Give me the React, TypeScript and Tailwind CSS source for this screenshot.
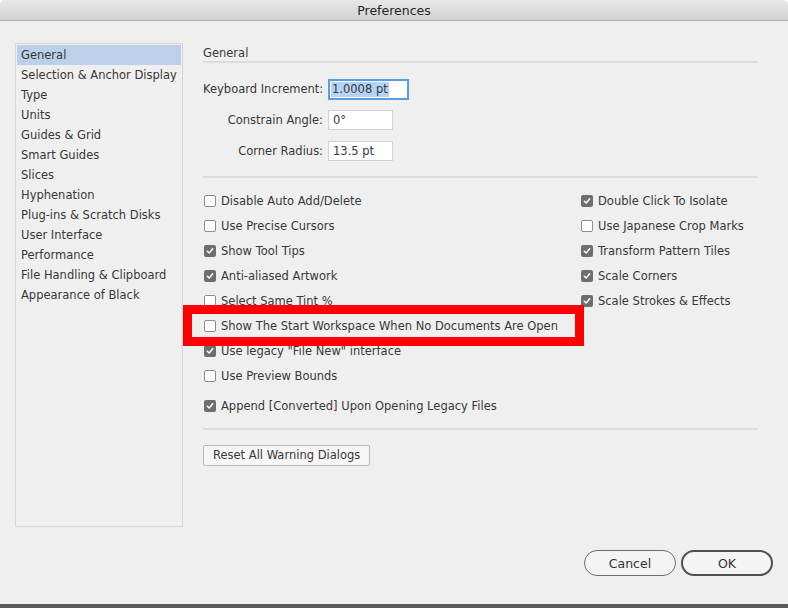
import React from 'react';

const font = { fontFamily: '"DejaVu Sans", "Liberation Sans", sans-serif' };

const sections = [
  'General',
  'Selection & Anchor Display',
  'Type',
  'Units',
  'Guides & Grid',
  'Smart Guides',
  'Slices',
  'Hyphenation',
  'Plug-ins & Scratch Disks',
  'User Interface',
  'Performance',
  'File Handling & Clipboard',
  'Appearance of Black',
];

const leftOptions: [string, boolean][] = [
  ['Disable Auto Add/Delete', false],
  ['Use Precise Cursors', false],
  ['Show Tool Tips', true],
  ['Anti-aliased Artwork', true],
  ['Select Same Tint %', false],
  ['Show The Start Workspace When No Documents Are Open', false],
  ['Use legacy "File New" interface', true],
  ['Use Preview Bounds', false],
];

const rightOptions: [string, boolean][] = [
  ['Double Click To Isolate', true],
  ['Use Japanese Crop Marks', false],
  ['Transform Pattern Tiles', true],
  ['Scale Corners', true],
  ['Scale Strokes & Effects', true],
];

// чекбокс в стиле macOS (серый при неактивном окне)
const Check: React.FC<{ checked: boolean }> = ({ checked }) =>
  checked ? (
    <span className="flex h-[12px] w-[12px] shrink-0 items-center justify-center rounded-[2px] bg-[#6e6e6e]">
      <svg width="8" height="8" viewBox="0 0 8 8">
        <path d="M1.3 4.2 L3.2 6 L6.7 1.8" fill="none" stroke="#fff" strokeWidth="1.5" strokeLinecap="round" strokeLinejoin="round" />
      </svg>
    </span>
  ) : (
    <span className="h-[12px] w-[12px] shrink-0 rounded-[2px] border border-[#8d8d8d] bg-white" />
  );

const Option: React.FC<{ label: string; checked: boolean }> = ({ label, checked }) => (
  <div className="flex h-[25px] items-center gap-[5px] whitespace-nowrap">
    <Check checked={checked} />
    <span className="pt-[2px]">{label}</span>
  </div>
);

const Field: React.FC<{ label: string; value: string; width: string; focused?: boolean }> = ({
  label,
  value,
  width,
  focused,
}) => (
  <div className="flex h-[20px] items-center">
    <span className="w-[120px] whitespace-nowrap pt-[2px] text-right">{label}</span>
    <div
      className={
        focused
          ? `ml-[5px] flex h-[21px] ${width} items-center border-2 border-[#5b9be6] bg-white pl-[1px] pt-[1px]`
          : `ml-[5px] flex h-[20px] ${width} items-center border border-[#d2d2d2] bg-white pl-[4px] pt-[2px]`
      }
    >
      {focused ? <span className="bg-[#b4d3f5] px-[1px] leading-[15px]">{value}</span> : <span>{value}</span>}
    </div>
  </div>
);

const Separator: React.FC = () => <div className="h-[2px] w-[555px] bg-[#dcdcdc]" />;

export default function App() {
  return (
    <div
      className="relative flex h-[608px] w-[788px] flex-col overflow-hidden rounded-t-[5px] bg-[#efefef] text-[11.5px] text-[#383838]"
      style={font}
    >
      <div className="flex h-[21px] shrink-0 items-center justify-center border-b border-[#b1b1b1] bg-gradient-to-b from-[#e8e8e8] to-[#d2d2d2] pt-[2px] text-[12.5px] text-[#262626]">
        Preferences
      </div>

      <div className="flex flex-1 flex-col">
        <div className="mt-[22px] flex">
          <div className="ml-[15px] h-[484px] w-[168px] border border-[#d6d6d6] p-[1px]">
            {sections.map((s, i) => (
              <div
                key={s}
                className={`h-[20px] whitespace-nowrap pl-[4px] leading-[20px] ${i === 0 ? 'bg-[#bcd0ea]' : ''}`}
              >
                {s}
              </div>
            ))}
          </div>

          <div className="ml-[20px] flex flex-col">
            <div className="h-[18px] pt-[1px] leading-[18px]">General</div>
            <Separator />

            <div className="mt-[16px] flex flex-col gap-[11px]">
              <Field label="Keyboard Increment:" value="1.0008 pt" width="w-[81px]" focused />
              <Field label="Constrain Angle:" value="0°" width="w-[65px]" />
              <Field label="Corner Radius:" value="13.5 pt" width="w-[65px]" />
            </div>

            <div className="mt-[15px]">
              <Separator />
            </div>

            <div className="mt-[10px] flex pl-[1px]">
              <div className="w-[377px]">
                {leftOptions.map(([l, c]) => (
                  <Option key={l} label={l} checked={c} />
                ))}
              </div>
              <div>
                {rightOptions.map(([l, c]) => (
                  <Option key={l} label={l} checked={c} />
                ))}
              </div>
            </div>
            <div className="mt-[5px] pl-[1px]">
              <Option label="Append [Converted] Upon Opening Legacy Files" checked />
            </div>

            <div className="mt-[10px]">
              <Separator />
            </div>

            <div className="mt-[15px]">
              <button className="h-[21px] rounded-[2px] border border-[#b9b9b9] bg-[#f6f6f6] px-[9px] pt-[1px] text-[11.5px] text-[#383838]">
                Reset All Warning Dialogs
              </button>
            </div>
          </div>
        </div>

        <div className="mt-auto flex justify-end gap-[5px] pb-[28px] pr-[15px]">
          <button className="h-[26px] w-[92px] rounded-full border border-[#6d6d6d] bg-[#f4f4f4] pt-[2px] text-[12.5px] text-[#333]">
            Cancel
          </button>
          <button className="h-[26px] w-[92px] rounded-full border-2 border-[#4f4f4f] bg-[#f4f4f4] pt-[2px] text-[12.5px] text-[#333]">
            OK
          </button>
        </div>
      </div>

      <div className="h-[4px] shrink-0 bg-[#595959]" />

      {/* красная рамка-выделение поверх содержимого */}
      <div className="absolute left-[183px] top-[305px] h-[41px] w-[401px] border-[9px] border-[#ff0000]" />
    </div>
  );
}
